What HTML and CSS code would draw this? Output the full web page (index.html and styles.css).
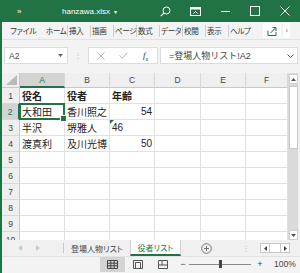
FILE: index.html
```html
<!DOCTYPE html>
<html lang="ja">
<head>
    <meta charset="UTF-8">
    <meta name="viewport" content="width=device-width, initial-scale=1.0">
    <title>hanzawa.xlsx</title>
    <link rel="stylesheet" href="styles.css">
</head>
<body>
<div class="window">

    <!-- title bar -->
    <div class="titlebar">
        <span class="qat">»</span>
        <span class="filename">hanzawa.xlsx <span class="caret">▾</span></span>
        <div class="winbtns">
            <span class="winbtn">
                <svg width="11" height="11" viewBox="0 0 11 11"><circle cx="6.5" cy="4.5" r="3.5" fill="none" stroke="#fff"/><path d="M4 7 L0.8 10.2" stroke="#fff" stroke-width="1.2"/></svg>
            </span>
            <span class="winbtn">
                <svg width="11" height="9" viewBox="0 0 11 9"><rect x="0.5" y="0.5" width="10" height="8" fill="none" stroke="#fff"/><rect x="1" y="1" width="9" height="1.5" fill="#fff"/><path d="M3.5 6.5 L5.5 4.5 L7.5 6.5" stroke="#fff" fill="none"/></svg>
            </span>
            <span class="winbtn">
                <svg width="9" height="1" viewBox="0 0 9 1"><path d="M0 0.5 H9" stroke="#fff"/></svg>
            </span>
            <span class="winbtn">
                <svg width="10" height="10" viewBox="0 0 10 10"><rect x="0.5" y="0.5" width="9" height="9" fill="none" stroke="#fff"/></svg>
            </span>
            <span class="winbtn">
                <svg width="10" height="10" viewBox="0 0 10 10"><path d="M0.5 0.5 L9.5 9.5 M9.5 0.5 L0.5 9.5" stroke="#fff"/></svg>
            </span>
        </div>
    </div>

    <!-- ribbon tabs -->
    <div class="ribbon-tabs">
        <span class="rtab first">ファイル</span>
        <span class="rtab">ホーム</span>
        <span class="rtab">挿入</span>
        <span class="rtab">描画</span>
        <span class="rtab">ページ</span>
        <span class="rtab">数式</span>
        <span class="rtab">データ</span>
        <span class="rtab">校閲</span>
        <span class="rtab">表示</span>
        <span class="rtab last">ヘルプ</span>
        <span class="share">
            <svg width="10" height="10" viewBox="0 0 10 10"><path d="M1 4.5 V9.5 H9 V6" fill="none" stroke="#217346"/><path d="M3.5 7 L8.5 2 M5.5 1.5 H9 V5" fill="none" stroke="#217346"/></svg>
        </span>
        <span class="more">›</span>
    </div>

    <!-- formula bar -->
    <div class="formula-row">
        <div class="namebox">
            <span>A2</span>
            <svg width="5" height="3" viewBox="0 0 5 3"><path d="M0 0 H5 L2.5 3 Z" fill="#666"/></svg>
        </div>
        <span class="fgrip">⋮</span>
        <div class="fbtns">
            <svg width="8" height="8" viewBox="0 0 8 8"><path d="M0.5 0.5 L7.5 7.5 M7.5 0.5 L0.5 7.5" stroke="#b4b4b4"/></svg>
            <svg width="9" height="7" viewBox="0 0 9 7"><path d="M0.5 3.5 L3.2 6.2 L8.5 0.5" stroke="#b4b4b4" fill="none"/></svg>
            <span class="fx">f<sub>x</sub></span>
        </div>
        <div class="finput">
            <span>=登場人物リスト!A2</span>
            <svg width="7" height="4" viewBox="0 0 7 4"><path d="M0.5 0.5 L3.5 3.5 L6.5 0.5" stroke="#555" fill="none"/></svg>
        </div>
    </div>

    <!-- sheet -->
    <div class="sheet">
        <div class="grid">
            <div class="corner"></div>
            <div class="ch sel">A</div><div class="ch">B</div><div class="ch">C</div><div class="ch">D</div><div class="ch">E</div><div class="ch">F</div>

            <div class="rh">1</div>
            <div class="c b">役名</div><div class="c b">役者</div><div class="c b">年齢</div><div class="c"></div><div class="c"></div><div class="c"></div>

            <div class="rh sel">2</div>
            <div class="c active">大和田</div><div class="c">香川照之</div><div class="c num">54</div><div class="c"></div><div class="c"></div><div class="c"></div>

            <div class="rh">3</div>
            <div class="c">半沢</div><div class="c">堺雅人</div><div class="c txtnum">46</div><div class="c"></div><div class="c"></div><div class="c"></div>

            <div class="rh">4</div>
            <div class="c">渡真利</div><div class="c">及川光博</div><div class="c num">50</div><div class="c"></div><div class="c"></div><div class="c"></div>

            <div class="rh">5</div>
            <div class="c"></div><div class="c"></div><div class="c"></div><div class="c"></div><div class="c"></div><div class="c"></div>
            <div class="rh">6</div>
            <div class="c"></div><div class="c"></div><div class="c"></div><div class="c"></div><div class="c"></div><div class="c"></div>
            <div class="rh">7</div>
            <div class="c"></div><div class="c"></div><div class="c"></div><div class="c"></div><div class="c"></div><div class="c"></div>
            <div class="rh">8</div>
            <div class="c"></div><div class="c"></div><div class="c"></div><div class="c"></div><div class="c"></div><div class="c"></div>
            <div class="rh">9</div>
            <div class="c"></div><div class="c"></div><div class="c"></div><div class="c"></div><div class="c"></div><div class="c"></div>
            <div class="rh">10</div>
            <div class="c"></div><div class="c"></div><div class="c"></div><div class="c"></div><div class="c"></div><div class="c"></div>
        </div>

        <div class="vscroll">
            <div class="vtrack">
                <span class="sarrow">
                    <svg width="5" height="3" viewBox="0 0 5 3"><path d="M0 3 H5 L2.5 0 Z" fill="#555"/></svg>
                </span>
                <div class="thumb"></div>
                <div class="track-fill"></div>
                <span class="sarrow">
                    <svg width="5" height="3" viewBox="0 0 5 3"><path d="M0 0 H5 L2.5 3 Z" fill="#555"/></svg>
                </span>
            </div>
        </div>
    </div>

    <!-- sheet tabs -->
    <div class="sheetbar">
        <div class="sheetnav">
            <svg width="4" height="6" viewBox="0 0 4 6"><path d="M4 0 V6 L0 3 Z" fill="#c8c8c8"/></svg>
            <svg width="4" height="6" viewBox="0 0 4 6"><path d="M0 0 V6 L4 3 Z" fill="#c8c8c8"/></svg>
        </div>
        <span class="stab">登場人物リスト</span>
        <span class="stab active">役者リスト</span>
        <span class="addsheet">
            <svg width="11" height="11" viewBox="0 0 11 11"><circle cx="5.5" cy="5.5" r="4.8" fill="none" stroke="#777"/><path d="M5.5 3 V8 M3 5.5 H8" stroke="#777"/></svg>
        </span>
        <span class="sgrip">⋮</span>
        <div class="hscroll">
            <span class="hbtn"><svg width="3" height="5" viewBox="0 0 3 5"><path d="M3 0 V5 L0 2.5 Z" fill="#444"/></svg></span>
            <span class="hmid"></span>
            <span class="hbtn"><svg width="3" height="5" viewBox="0 0 3 5"><path d="M0 0 V5 L3 2.5 Z" fill="#444"/></svg></span>
        </div>
    </div>

    <!-- status bar -->
    <div class="statusbar">
        <span class="view on">
            <svg width="11" height="9" viewBox="0 0 11 9"><path d="M0.5 0.5 H10.5 V8.5 H0.5 Z M0.5 3.2 H10.5 M0.5 5.8 H10.5 M3.8 0.5 V8.5 M7.2 0.5 V8.5" fill="none" stroke="#444"/></svg>
        </span>
        <span class="view">
            <svg width="10" height="9" viewBox="0 0 10 9"><path d="M0.5 0.5 H9.5 V8.5 H0.5 Z" fill="none" stroke="#555"/><path d="M2.5 2.5 H7.5 V8.5 H2.5 Z" fill="none" stroke="#555"/></svg>
        </span>
        <span class="view">
            <svg width="10" height="9" viewBox="0 0 10 9"><path d="M0.5 0.5 H9.5 V8.5 H0.5 Z M0.5 5 H9.5 M4 0.5 V5" fill="none" stroke="#555"/></svg>
        </span>
        <span class="zoomctl">−</span>
        <div class="slider"><span class="knob"></span></div>
        <span class="zoomctl">+</span>
        <span class="zoompct">100%</span>
    </div>

</div>
</body>
</html>
```

FILE: styles.css
```css
* {
    box-sizing: border-box;
}
body {
    margin: 0;
    font-family: "Liberation Sans", "Noto Sans CJK JP", sans-serif;
    color: #333;
}
.window {
    width: 300px;
    height: 273px;
    border-left: 2px solid #217346;
    background: #f3f3f3;
    display: flex;
    flex-direction: column;
    overflow: hidden;
}

/* Title bar */
.titlebar {
    height: 22px;
    flex-shrink: 0;
    background: #217346;
    color: #fff;
    display: flex;
    align-items: center;
}
.qat {
    width: 60px;
    padding-left: 15px;
    font-size: 8px;
}
.filename {
    font-size: 8px;
}
.caret {
    font-size: 6px;
    margin-left: 2px;
}
.winbtns {
    margin-left: auto;
    display: flex;
}
.winbtn {
    width: 30px;
    height: 22px;
    display: flex;
    align-items: center;
    justify-content: center;
}

/* Ribbon tabs */
.ribbon-tabs {
    height: 18px;
    flex-shrink: 0;
    display: flex;
    align-items: center;
    padding-left: 8px;
    border-bottom: 1px solid #e2e2e2;
    font-family: "Noto Sans CJK JP", sans-serif;
    font-feature-settings: "palt";
    font-size: 7.5px;
    letter-spacing: -0.3px;
    color: #333;
}
.rtab {
    width: 23px;
    height: 12px;
    line-height: 12px;
    padding-left: 1px;
    border-right: 1px solid #cfcfcf;
    white-space: nowrap;
}
.rtab.first {
    width: 35px;
    border-right: none;
    padding-left: 0;
    font-size: 8px;
}
.rtab.last {
    border-right: none;
}
.share {
    margin-left: 11px;
    width: 18px;
    height: 15px;
    background: #fff;
    display: flex;
    align-items: center;
    justify-content: center;
}
.more {
    margin-left: 2px;
    width: 7px;
    height: 15px;
    background: #fff;
    font-size: 8px;
    line-height: 14px;
    text-align: center;
    color: #555;
}

/* Formula bar */
.formula-row {
    height: 33px;
    flex-shrink: 0;
    display: flex;
    align-items: flex-start;
    padding: 7px 2px 0 2px;
}
.namebox {
    width: 64px;
    height: 17px;
    background: #fff;
    border: 1px solid #dcdcdc;
    display: flex;
    align-items: center;
    justify-content: space-between;
    padding: 0 4px 0 4px;
    font-size: 8.5px;
    color: #444;
}
.fgrip {
    width: 20px;
    height: 17px;
    line-height: 17px;
    text-align: center;
    font-size: 8px;
    color: #bbb;
}
.fbtns {
    width: 70px;
    height: 17px;
    background: #fff;
    border: 1px solid #dcdcdc;
    display: flex;
    align-items: center;
    padding-left: 8px;
    gap: 14px;
}
.fx {
    font-family: "Liberation Serif", serif;
    font-style: italic;
    font-size: 9px;
    color: #333;
    margin-left: 1px;
}
.fx sub {
    font-size: 6px;
}
.finput {
    flex: 1;
    margin-left: 2px;
    height: 17px;
    background: #fff;
    border: 1px solid #dcdcdc;
    display: flex;
    align-items: center;
    justify-content: space-between;
    padding: 0 3px 0 8px;
    font-family: "Liberation Sans", "Noto Sans CJK JP", sans-serif;
    font-size: 9px;
    color: #444;
}

/* Sheet grid */
.sheet {
    height: 167px;
    flex-shrink: 0;
    display: flex;
    overflow: hidden;
    background: #fff;
}
.grid {
    width: 286px;
    display: grid;
    grid-template-columns: 18px 45px 45px 45px 46px 45px 42px;
    grid-template-rows: 15px repeat(10, 16px);
    font-size: 10px;
}
.corner {
    position: relative;
    background: #efefef;
    border-right: 1px solid #c8c8c8;
    border-bottom: 1px solid #c8c8c8;
}
.corner::after {
    content: "";
    position: absolute;
    right: 2px;
    bottom: 2px;
    border-style: solid;
    border-width: 0 0 10px 11px;
    border-color: transparent transparent #b9b9b9 transparent;
}
.ch, .rh {
    background: #efefef;
    color: #444;
    font-size: 8.5px;
    display: flex;
    align-items: center;
    justify-content: center;
}
.ch {
    border-right: 1px solid #d7d7d7;
    border-bottom: 1px solid #c8c8c8;
}
.rh {
    border-right: 1px solid #c8c8c8;
    border-bottom: 1px solid #d7d7d7;
}
.ch.sel {
    background: #d3d3d3;
    color: #217346;
    border-bottom: 2px solid #217346;
}
.rh.sel {
    background: #d3d3d3;
    color: #217346;
    border-right: 2px solid #217346;
}
.c {
    border-right: 1px solid #e1e1e1;
    border-bottom: 1px solid #e1e1e1;
    padding: 0 2px;
    line-height: 15px;
    white-space: nowrap;
    color: #222;
    font-family: "Noto Sans CJK JP", sans-serif;
}
.c.b {
    font-weight: bold;
}
.c.num, .c.txtnum {
    font-family: "Liberation Sans", sans-serif;
    font-size: 10px;
}
.c.num {
    text-align: right;
}
.c.txtnum {
    position: relative;
}
.c.txtnum::before {
    content: "";
    position: absolute;
    left: 0;
    top: 0;
    border-style: solid;
    border-width: 4px 4px 0 0;
    border-color: #217346 transparent transparent transparent;
}
.c.active {
    position: relative;
}
.c.active::after {
    content: "";
    position: absolute;
    left: -1px;
    top: -1px;
    right: -1px;
    bottom: -1px;
    border: 2px solid #217346;
}
.c.active::before {
    content: "";
    position: absolute;
    right: -3px;
    bottom: -3px;
    width: 5px;
    height: 5px;
    background: #217346;
    border: 1px solid #fff;
    z-index: 1;
}

/* Vertical scrollbar */
.vscroll {
    width: 12px;
    background: #f0f0f0;
    padding-right: 2px;
}
.vtrack {
    height: 100%;
    background: #dadada;
    display: flex;
    flex-direction: column;
    padding: 1px 0 0 1px;
}
.sarrow {
    height: 10px;
    background: #fff;
    border: 1px solid #cfcfcf;
    display: flex;
    align-items: center;
    justify-content: center;
}
.thumb {
    margin-top: 2px;
    height: 63px;
    background: #fff;
    border: 1px solid #c8c8c8;
}
.track-fill {
    flex: 1;
}

/* Sheet tabs */
.sheetbar {
    height: 16px;
    flex-shrink: 0;
    display: flex;
    align-items: stretch;
    background: #f0f0f0;
    font-family: "Noto Sans CJK JP", sans-serif;
    font-feature-settings: "palt";
    font-size: 8px;
}
.sheetnav {
    width: 62px;
    display: flex;
    align-items: center;
    padding-left: 16px;
    gap: 14px;
    border-right: 1px solid #c6c6c6;
    margin: 3px 0;
}
.stab {
    width: 66px;
    display: flex;
    align-items: center;
    justify-content: center;
    color: #444;
}
.stab.active {
    width: 51px;
    background: #fff;
    color: #217346;
    border-left: 1px solid #d0d0d0;
    border-right: 1px solid #d0d0d0;
    border-bottom: 2px solid #217346;
}
.addsheet {
    width: 51px;
    display: flex;
    align-items: center;
    justify-content: center;
}
.sgrip {
    width: 28px;
    text-align: center;
    line-height: 16px;
    color: #c0c0c0;
}
.hscroll {
    width: 30px;
    margin: 3px 0;
    display: flex;
    border: 1px solid #c8c8c8;
    background: #fff;
}
.hbtn {
    width: 8px;
    display: flex;
    align-items: center;
    justify-content: center;
}
.hmid {
    flex: 1;
    border-left: 1px solid #c8c8c8;
    border-right: 1px solid #c8c8c8;
}

/* Status bar */
.statusbar {
    height: 16px;
    flex-shrink: 0;
    display: flex;
    align-items: stretch;
    padding-left: 98px;
    border-top: 1px solid #e2e2e2;
    font-size: 8.5px;
    color: #444;
}
.view {
    width: 25px;
    display: flex;
    align-items: center;
    justify-content: center;
}
.view.on {
    background: #d4d4d4;
}
.zoomctl {
    width: 10px;
    margin-left: 3px;
    text-align: center;
    line-height: 15px;
    font-size: 9px;
}
.slider {
    width: 62px;
    margin: 0 1px;
    position: relative;
    display: flex;
    align-items: center;
}
.slider::before {
    content: "";
    flex: 1;
    height: 1px;
    background: #888;
}
.knob {
    position: absolute;
    left: 30px;
    top: 3px;
    width: 3px;
    height: 8px;
    background: #444;
}
.zoompct {
    margin-left: 9px;
    line-height: 15px;
}
```
